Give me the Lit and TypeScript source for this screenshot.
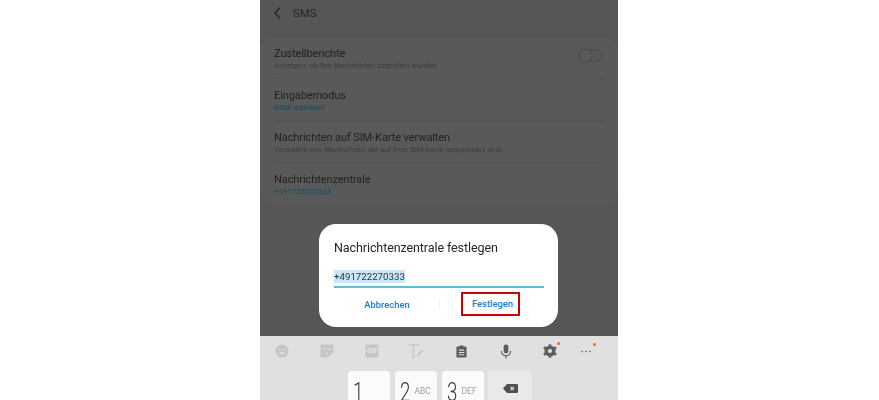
import { LitElement, html, css, svg } from "lit";
import { customElement } from "lit/decorators.js";

const rows = [
  { t: "Zustellberichte", s: "Anzeigen, ob Ihre Nachrichten zugestellt wurden.", blue: false, toggle: true },
  { t: "Eingabemodus", s: "GSM-Alphabet", blue: true, toggle: false },
  { t: "Nachrichten auf SIM-Karte verwalten", s: "Verwalten von Nachrichten, die auf Ihrer SIM-Karte gespeichert sind.", blue: false, toggle: false },
  { t: "Nachrichtenzentrale", s: "+491722270333", blue: true, toggle: false },
];

@customElement("app-root")
export class AppRoot extends LitElement {
  static styles = css`
    :host { display: block; width: 879px; height: 400px; background: #fff; overflow: hidden; font-family: Roboto, "Liberation Sans", sans-serif; }
    .phone { position: relative; width: 358px; height: 400px; margin-left: 260px; background: #565656; display: flex; flex-direction: column; overflow: hidden; }
    .soft { filter: blur(0.25px); }
    .head { height: 37px; flex: none; display: flex; align-items: flex-start; padding: 6px 0 0 14px; gap: 12px; color: #262626; font-size: 11.5px; line-height: 15px; box-sizing: border-box; }
    .head svg { display: block; }
    .card { flex: none; height: 168px; background: #595959; border-radius: 15px; display: flex; flex-direction: column; padding: 0 13px 0 14px; box-sizing: border-box; }
    .row { height: 42px; flex: none; box-sizing: border-box; padding-top: 10px; border-bottom: 1px solid #525252; display: flex; align-items: flex-start; justify-content: space-between; }
    .row:last-child { border-bottom: none; }
    .t { font-size: 11px; letter-spacing: -0.09px; line-height: 13px; color: #222; white-space: nowrap; }
    .s { font-size: 7.6px; line-height: 10px; margin-top: 1px; color: #3d3d3d; white-space: nowrap; }
    .s.blue { color: #1a5062; font-size: 7.8px; font-weight: 500; }
    .toggle { width: 25px; height: 15px; margin-top: 1px; margin-right: 2px; display: block; }
    .spacer { flex: 1; }
    .kb { flex: none; height: 64px; background: #e0e0e0; display: flex; flex-direction: column; }
    .tools { height: 35px; flex: none; display: flex; position: relative; }
    .tool { width: 44.7px; height: 30px; display: flex; align-items: center; justify-content: center; flex: none; }
    .tool.more { margin-left: -9px; }
    .dot { position: absolute; width: 3px; height: 3px; border-radius: 50%; background: #f0651e; }
    .dot.a { left: 297px; top: 6px; }
    .dot.b { left: 333px; top: 7px; }
    .keys { display: flex; gap: 5px; padding-left: 88px; }
    .key { width: 42px; height: 40px; background: #fbfbfb; border-radius: 4px; display: flex; align-items: flex-start; padding: 7px 0 0 4.5px; box-sizing: border-box; white-space: nowrap; }
    .num { font-size: 26px; line-height: 29px; font-weight: 300; color: #3a3a3a; display: block; width: 15px; transform: scaleX(0.72); transform-origin: left top; }
    .key span.sub { font-size: 8.5px; color: #a0a0a0; line-height: 26px; }
    .back { width: 44px; height: 40px; margin-left: -1px; margin-top: -1px; background: #e9e9ec; border-radius: 4px; display: flex; justify-content: center; padding-top: 14px; box-sizing: border-box; }
    .dialog { position: absolute; left: 59px; top: 224px; width: 239px; height: 103px; background: #fff; border-radius: 17px; box-sizing: border-box; padding: 16px 14px 0 15px; display: flex; flex-direction: column; }
    .title { font-size: 12.5px; letter-spacing: -0.09px; line-height: 15px; color: #252525; white-space: nowrap; }
    .input { margin-top: 15px; height: 16px; border-bottom: 2px solid #62b9dd; font-size: 9.7px; line-height: 13px; color: #333; }
    .input span { background: #c6e8fa; display: inline-block; height: 13px; }
    .btns { display: flex; align-items: center; margin-top: 4px; height: 24px; margin-left: 1px; }
    .btn { font-size: 9.4px; font-weight: 500; color: #1a7fcb; white-space: nowrap; text-align: center; }
    .cancel { width: 104px; }
    .sep { width: 1px; height: 12px; background: #f0f0f0; margin-right: 21px; }
    .ok { width: 59px; height: 24px; box-sizing: border-box; border: 2px solid #c8000a; line-height: 20px; padding-left: 4px; }
  `;

  private icon(i: number) {
    const faint = "#c6c6c6", dark = "#5c5c5c";
    const icons = [
      svg`<svg width="14" height="14" viewBox="0 0 14 14"><circle cx="7" cy="7" r="6.5" fill="${faint}"/><circle cx="4.8" cy="5.5" r="1" fill="#e0e0e0"/><circle cx="9.2" cy="5.5" r="1" fill="#e0e0e0"/><path d="M3.8 8.3a3.4 3.4 0 0 0 6.4 0z" fill="#e0e0e0"/></svg>`,
      svg`<svg width="14" height="14" viewBox="0 0 14 14"><path d="M1.5 0.5h11a1 1 0 0 1 1 1V8L8 13.5H1.5a1 1 0 0 1-1-1v-11a1 1 0 0 1 1-1z" fill="${faint}"/><circle cx="4.5" cy="5" r="1" fill="#e0e0e0"/><circle cx="9.5" cy="5" r="1" fill="#e0e0e0"/><path d="M3.5 8.5c2 1 4 1 5.5 0.2L7.5 13v-2.5z" fill="#e0e0e0"/></svg>`,
      svg`<svg width="14" height="14" viewBox="0 0 14 14"><rect x="0.5" y="0.5" width="13" height="13" rx="1.5" fill="${faint}"/><text x="7" y="9.3" text-anchor="middle" font-size="6.5" font-weight="700" font-family="Roboto, sans-serif" fill="#e6e6e6">GIF</text></svg>`,
      svg`<svg width="16" height="14" viewBox="0 0 16 14"><path d="M0.8 1.5V0.8h9.5v0.7M5.5 1v12M3.8 13h3.4" stroke="${faint}" stroke-width="1.3" fill="none"/><path d="M9 12.5l1-3 4-4 1.5 1.5-4 4z" fill="${faint}"/></svg>`,
      svg`<svg width="11" height="13" viewBox="0 0 12 14"><path d="M1.5 1.5h2.5V0.5h4v1h2.5a1 1 0 0 1 1 1v10a1 1 0 0 1-1 1h-9a1 1 0 0 1-1-1v-10a1 1 0 0 1 1-1z" fill="${dark}"/><path d="M3 5.5h6M3 8h6M3 10.5h6" stroke="#e0e0e0" stroke-width="1.1"/></svg>`,
      svg`<svg width="12" height="15" viewBox="0 0 12 16"><rect x="3.5" y="0.5" width="5" height="9.5" rx="2.5" fill="${dark}"/><path d="M1 7.5a5 5 0 0 0 10 0M6 12.5v3" stroke="${dark}" stroke-width="1.2" fill="none"/></svg>`,
      svg`<svg width="14" height="14" viewBox="0 0 14 14"><circle cx="7" cy="7" r="4.1" fill="none" stroke="${dark}" stroke-width="2.9"/><path d="M7 0.3v13.4M0.8 3.4l12.4 7.2M13.2 3.4L0.8 10.6" stroke="${dark}" stroke-width="2.4"/><circle cx="7" cy="7" r="2.1" fill="#e0e0e0"/></svg>`,
      svg`<svg width="10" height="3" viewBox="0 0 10 3"><circle cx="1.2" cy="1.5" r="0.8" fill="${dark}"/><circle cx="5" cy="1.5" r="0.8" fill="${dark}"/><circle cx="8.8" cy="1.5" r="0.8" fill="${dark}"/></svg>`,
    ];
    return icons[i];
  }

  render() {
    return html`
      <div class="phone">
        <div class="head soft">
          <svg width="7" height="14" viewBox="0 0 7 14"><path d="M6 1.5L1 7l5 5.5" fill="none" stroke="#262626" stroke-width="1.3"/></svg>
          <span>SMS</span>
        </div>
        <div class="card soft">
          ${rows.map(r => html`
            <div class="row">
              <div>
                <div class="t">${r.t}</div>
                <div class="s ${r.blue ? "blue" : ""}">${r.s}</div>
              </div>
              ${r.toggle ? html`<svg class="toggle" viewBox="0 0 25 15"><rect x="1.5" y="2" width="23" height="11" rx="5.5" fill="none" stroke="#474747"/><circle cx="7.5" cy="7.5" r="6.5" fill="#595959" stroke="#474747"/></svg>` : ""}
            </div>`)}
        </div>
        <div class="spacer"></div>
        <div class="kb">
          <div class="tools soft">
            ${[0, 1, 2, 3, 4, 5, 6, 7].map(i => html`<div class="tool ${i === 7 ? "more" : ""}">${this.icon(i)}</div>`)}
            <div class="dot a"></div>
            <div class="dot b"></div>
          </div>
          <div class="keys soft">
            <div class="key"><span class="num">1</span></div>
            <div class="key"><span class="num">2</span><span class="sub">ABC</span></div>
            <div class="key"><span class="num">3</span><span class="sub">DEF</span></div>
            <div class="back"><svg width="15" height="9" viewBox="0 0 15 9"><path d="M4 0h10a1 1 0 0 1 1 1v7a1 1 0 0 1-1 1H4L0 4.5z" fill="#505050"/><path d="M7.5 2.8l3.4 3.4M10.9 2.8L7.5 6.2" stroke="#e9e9ec" stroke-width="1.1"/></svg></div>
          </div>
        </div>
        <div class="dialog">
          <div class="title soft">Nachrichtenzentrale festlegen</div>
          <div class="input"><span class="soft">+491722270333</span></div>
          <div class="btns">
            <div class="btn cancel soft">Abbrechen</div>
            <div class="sep"></div>
            <div class="btn ok">Festlegen</div>
          </div>
        </div>
      </div>`;
  }
}
